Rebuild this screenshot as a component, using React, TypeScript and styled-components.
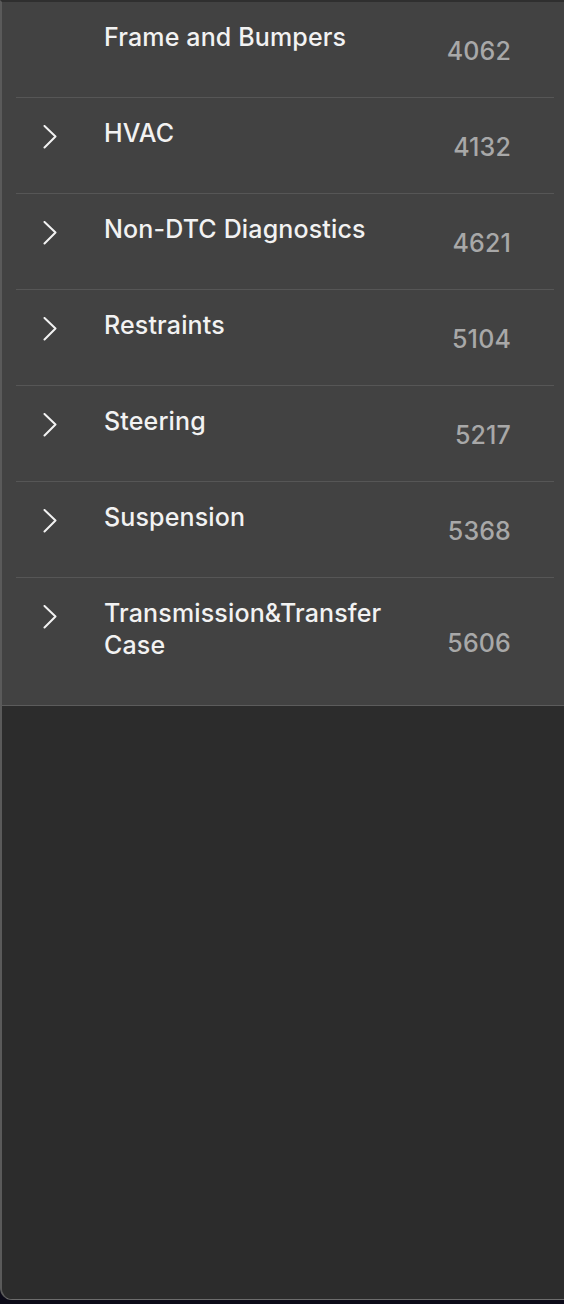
import React from "react";
import styled, { createGlobalStyle } from "styled-components";

const Global = createGlobalStyle`
  html, body { margin: 0; padding: 0; background: #0c0a18; }
  body { font-family: Inter, "Noto Sans", "Liberation Sans", sans-serif; -webkit-font-smoothing: antialiased; }
`;

const Window = styled.div`
  box-sizing: border-box;
  width: 580px;
  height: 1300px;
  display: flex;
  flex-direction: column;
  background: #2c2c2c;
  border-top: 2px solid #2f2f2f;
  border-left: 2px solid #5a5a5a;
  border-bottom: 1px solid #6c6c6c;
  border-bottom-left-radius: 12px;
  overflow: hidden;
`;

const Panel = styled.div`
  background: #424242;
  border-bottom: 1px solid #5c5c5c;
`;

const Row = styled.div<{ $last?: boolean }>`
  display: grid;
  grid-template-columns: 68px 1fr auto;
  column-gap: 20px;
  margin-left: 14px;
  width: 538px;
  padding: 0 43px 0 0;
  box-sizing: border-box;
  border-bottom: ${(p) => (p.$last ? "none" : "1px solid #565656")};
`;

const ChevronCell = styled.div`
  padding-left: 27px;
  padding-top: 27px;
  display: flex;
  align-items: flex-start;
`;

const Title = styled.div`
  padding: 19px 0 44px;
  color: #f2f2f2;
  font-size: 25px;
  letter-spacing: 0.15px;
  line-height: 32px;
  font-weight: 500;
`;

const Count = styled.div`
  align-self: center;
  margin-top: 3px;
  color: #a8a8a8;
  font-size: 25px;
  letter-spacing: 0.15px;
  line-height: 32px;
  font-weight: 500;
  text-align: right;
`;

const Empty = styled.div`
  flex: 1;
  background: #2c2c2c;
`;

const Chevron = () => (
  <svg width="14" height="24" viewBox="0 0 14 24" fill="none">
    <polyline points="1.5,1 12.5,11.5 1.5,22.5" stroke="#f2f2f2" strokeWidth="2" strokeLinecap="round" strokeLinejoin="round" />
  </svg>
);

const items: { title: string; count: string; chevron: boolean }[] = [
  { title: "Frame and Bumpers", count: "4062", chevron: false },
  { title: "HVAC", count: "4132", chevron: true },
  { title: "Non-DTC Diagnostics", count: "4621", chevron: true },
  { title: "Restraints", count: "5104", chevron: true },
  { title: "Steering", count: "5217", chevron: true },
  { title: "Suspension", count: "5368", chevron: true },
  { title: "Transmission&Transfer Case", count: "5606", chevron: true },
];

export default function App() {
  return (
    <>
      <Global />
      <Window>
        <Panel>
          {items.map((it, i) => (
            <Row key={it.title} $last={i === items.length - 1}>
              <ChevronCell>{it.chevron && <Chevron />}</ChevronCell>
              <Title>{it.title}</Title>
              <Count>{it.count}</Count>
            </Row>
          ))}
        </Panel>
        <Empty />
      </Window>
    </>
  );
}
